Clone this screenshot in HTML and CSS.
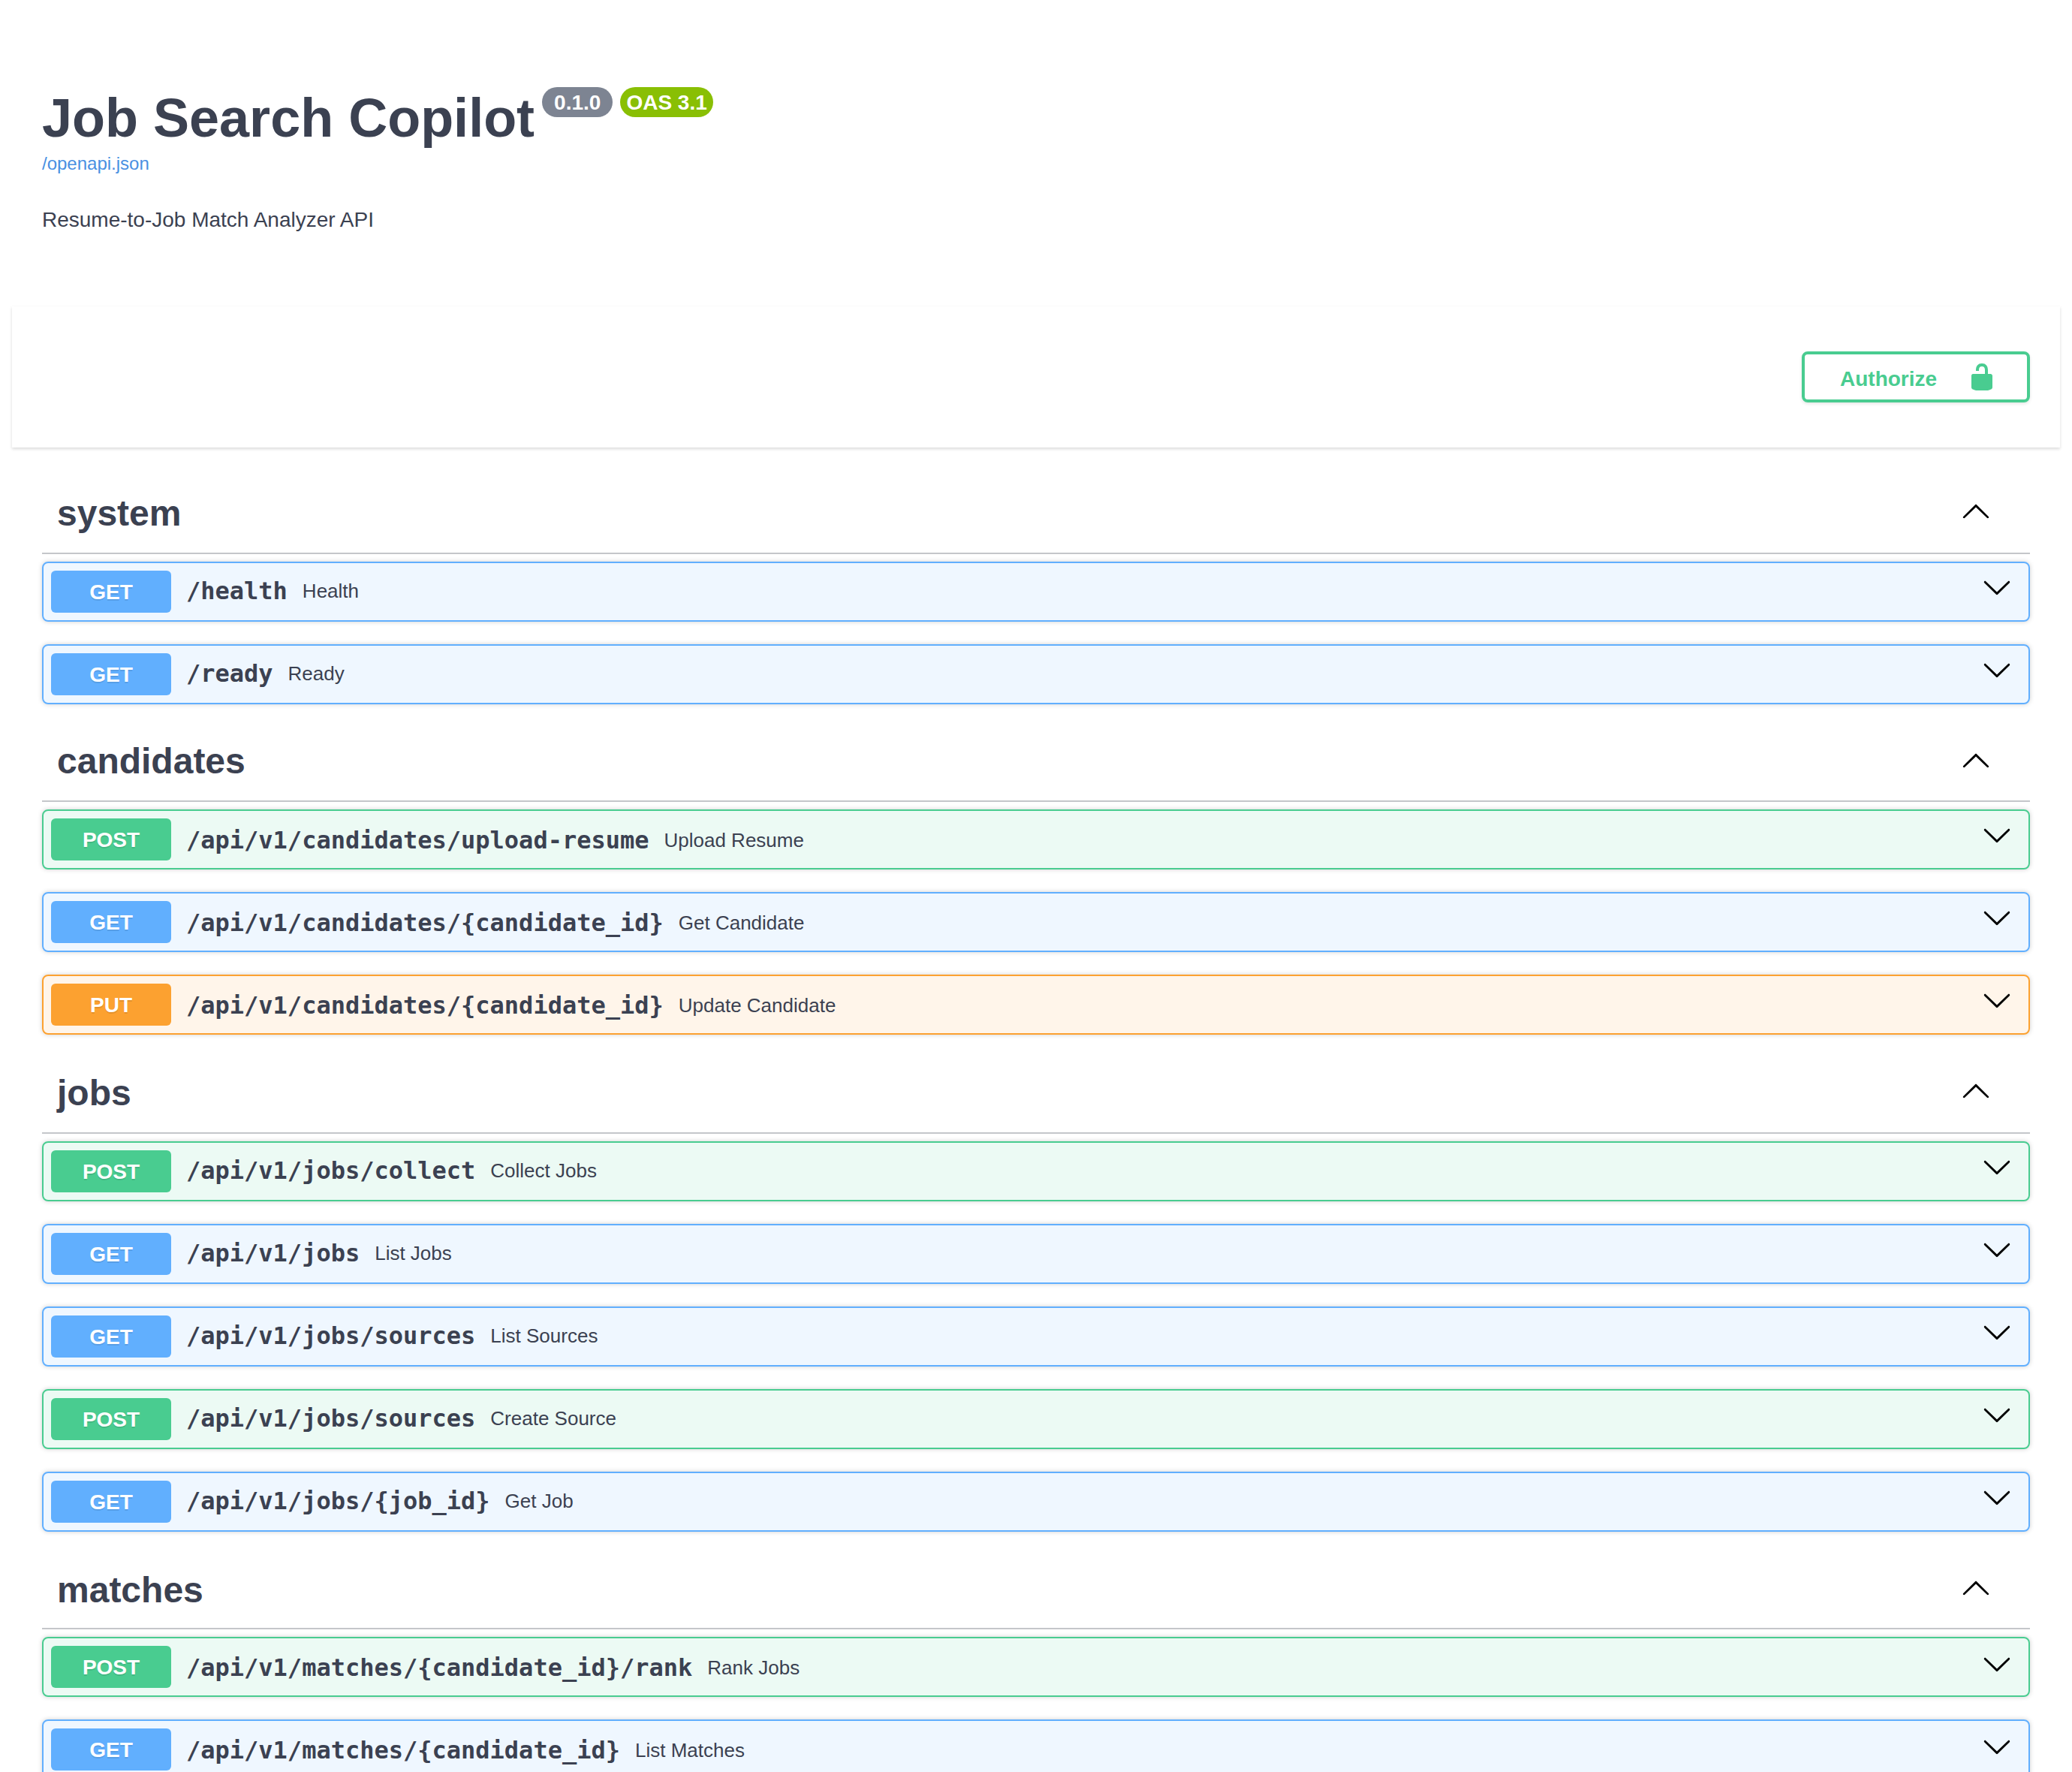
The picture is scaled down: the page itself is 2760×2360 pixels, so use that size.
FILE: index.html
```
<!DOCTYPE html>
<html lang="en">
<head>
    <meta charset="utf-8">
    <title>Job Search Copilot - Swagger UI</title>
    <link rel="stylesheet" href="styles.css">
</head>
<body>
    <!-- shared icons -->
    <svg class="sprite" width="0" height="0">
        <symbol id="unlocked" viewBox="0 0 20 20">
            <path d="M15.8 8H14V5.6C14 2.703 12.665 1 10 1 7.334 1 6 2.703 6 5.6V6h2v-.801C8 3.754 8.797 3 10 3c1.203 0 2 .754 2 2.199V8H4c-.553 0-1 .646-1 1.199V17c0 .549.428 1.139.951 1.307l1.197.387C5.672 18.861 6.55 19 7.1 19h5.8c.549 0 1.428-.139 1.951-.307l1.196-.387c.524-.167.953-.757.953-1.306V9.199C17 8.646 16.352 8 15.8 8z"/>
        </symbol>
        <symbol id="arrow-up" viewBox="0 0 20 20">
            <path d="M17.418 14.908c.272.268.709.268.979 0s.271-.701 0-.969l-7.908-7.83c-.27-.268-.707-.268-.979 0l-7.908 7.83c-.27.268-.27.701 0 .969.271.268.709.268.979 0L10 7.767l7.418 7.141z"/>
        </symbol>
        <symbol id="arrow-down" viewBox="0 0 20 20">
            <path d="M17.418 6.109c.272-.268.709-.268.979 0s.271.701 0 .969l-7.908 7.83c-.27.268-.707.268-.979 0l-7.908-7.83c-.27-.268-.27-.701 0-.969.271-.268.709-.268.979 0L10 13.25l7.418-7.141z"/>
        </symbol>
    </svg>

    <div class="swagger-ui">
        <div class="info">
            <div class="title-row">
                <h1 class="title">Job Search Copilot</h1>
                <span class="version">0.1.0</span>
                <span class="version oas">OAS 3.1</span>
            </div>
            <a class="link" href="/openapi.json">/openapi.json</a>
            <p class="description">Resume-to-Job Match Analyzer API</p>
        </div>

        <div class="scheme-container">
            <button class="authorize">
                <span>Authorize</span>
                <svg class="icon"><use href="#unlocked"/></svg>
            </button>
        </div>

        <div class="sections">
            <section class="tag-section">
                <div class="tag-header">
                    <h3>system</h3>
                    <svg class="icon"><use href="#arrow-up"/></svg>
                </div>
                <div class="opblock get">
                    <span class="method">GET</span>
                    <span class="path">/health</span>
                    <span class="summary">Health</span>
                    <svg class="icon"><use href="#arrow-down"/></svg>
                </div>
                <div class="opblock get">
                    <span class="method">GET</span>
                    <span class="path">/ready</span>
                    <span class="summary">Ready</span>
                    <svg class="icon"><use href="#arrow-down"/></svg>
                </div>
            </section>

            <section class="tag-section">
                <div class="tag-header">
                    <h3>candidates</h3>
                    <svg class="icon"><use href="#arrow-up"/></svg>
                </div>
                <div class="opblock post">
                    <span class="method">POST</span>
                    <span class="path">/api/v1/candidates/upload-resume</span>
                    <span class="summary">Upload Resume</span>
                    <svg class="icon"><use href="#arrow-down"/></svg>
                </div>
                <div class="opblock get">
                    <span class="method">GET</span>
                    <span class="path">/api/v1/candidates/{candidate_id}</span>
                    <span class="summary">Get Candidate</span>
                    <svg class="icon"><use href="#arrow-down"/></svg>
                </div>
                <div class="opblock put">
                    <span class="method">PUT</span>
                    <span class="path">/api/v1/candidates/{candidate_id}</span>
                    <span class="summary">Update Candidate</span>
                    <svg class="icon"><use href="#arrow-down"/></svg>
                </div>
            </section>

            <section class="tag-section jobs">
                <div class="tag-header">
                    <h3>jobs</h3>
                    <svg class="icon"><use href="#arrow-up"/></svg>
                </div>
                <div class="opblock post">
                    <span class="method">POST</span>
                    <span class="path">/api/v1/jobs/collect</span>
                    <span class="summary">Collect Jobs</span>
                    <svg class="icon"><use href="#arrow-down"/></svg>
                </div>
                <div class="opblock get">
                    <span class="method">GET</span>
                    <span class="path">/api/v1/jobs</span>
                    <span class="summary">List Jobs</span>
                    <svg class="icon"><use href="#arrow-down"/></svg>
                </div>
                <div class="opblock get">
                    <span class="method">GET</span>
                    <span class="path">/api/v1/jobs/sources</span>
                    <span class="summary">List Sources</span>
                    <svg class="icon"><use href="#arrow-down"/></svg>
                </div>
                <div class="opblock post">
                    <span class="method">POST</span>
                    <span class="path">/api/v1/jobs/sources</span>
                    <span class="summary">Create Source</span>
                    <svg class="icon"><use href="#arrow-down"/></svg>
                </div>
                <div class="opblock get">
                    <span class="method">GET</span>
                    <span class="path">/api/v1/jobs/{job_id}</span>
                    <span class="summary">Get Job</span>
                    <svg class="icon"><use href="#arrow-down"/></svg>
                </div>
            </section>

            <section class="tag-section matches">
                <div class="tag-header">
                    <h3>matches</h3>
                    <svg class="icon"><use href="#arrow-up"/></svg>
                </div>
                <div class="opblock post">
                    <span class="method">POST</span>
                    <span class="path">/api/v1/matches/{candidate_id}/rank</span>
                    <span class="summary">Rank Jobs</span>
                    <svg class="icon"><use href="#arrow-down"/></svg>
                </div>
                <div class="opblock get">
                    <span class="method">GET</span>
                    <span class="path">/api/v1/matches/{candidate_id}</span>
                    <span class="summary">List Matches</span>
                    <svg class="icon"><use href="#arrow-down"/></svg>
                </div>
            </section>
        </div>
    </div>
</body>
</html>
```
FILE: styles.css
```
* {
    box-sizing: border-box;
}
body {
    margin: 0;
    padding: 0 16px;
    height: 100vh;
    overflow: hidden;
    background: #fff;
    color: #3b4151;
    font-family: "Liberation Sans", Arial, sans-serif;
}
.sprite {
    display: block;
}
.icon {
    width: 40px;
    height: 40px;
    flex-shrink: 0;
}

/* info */
.info {
    height: 408px;
    padding: 116px 40px 0;
}
.title-row {
    display: flex;
    align-items: flex-start;
}
.title {
    margin: 0 10px 0 0;
    font-size: 72px;
    line-height: 83px;
}
.version {
    height: 40px;
    margin-right: 10px;
    padding: 0 16px;
    border-radius: 20px;
    background: #7d8492;
    color: #fff;
    font-size: 28px;
    font-weight: bold;
    line-height: 42px;
}
.version.oas {
    padding: 0 8px;
    background: #89bf04;
}
.link {
    display: block;
    margin-top: 5px;
    color: #4990e2;
    font-size: 24px;
    line-height: 28px;
    text-decoration: none;
}
.description {
    margin: 45px 0 0;
    font-size: 28px;
    line-height: 32px;
}

/* authorize bar */
.scheme-container {
    display: flex;
    justify-content: flex-end;
    padding: 60px 40px;
    background: #fff;
    box-shadow: 0 2px 4px rgba(0, 0, 0, .15);
}
.authorize {
    display: flex;
    justify-content: space-between;
    width: 304px;
    height: 68px;
    padding: 10px 40px 10px 47px;
    border: 4px solid #49cc90;
    border-radius: 8px;
    background: transparent;
    box-shadow: 0 2px 4px rgba(0, 0, 0, .1);
    color: #49cc90;
    font-family: inherit;
    font-size: 28px;
    font-weight: bold;
    line-height: 32px;
}
.authorize span {
    padding-top: 7px;
}
.authorize .icon {
    fill: #49cc90;
}

/* operations */
.sections {
    padding: 42px 40px 0;
}
.tag-section.jobs {
    padding-top: 2px;
}
.tag-header {
    display: flex;
    justify-content: space-between;
    height: 100px;
    margin-bottom: 10px;
    padding: 18px 52px 0 20px;
    border-bottom: 2px solid rgba(59, 65, 81, .3);
}
.tag-header h3 {
    margin: 0;
    font-size: 48px;
    line-height: 56px;
}
.matches .tag-header h3 {
    padding-top: 2px;
}
.tag-header .icon {
    margin-top: 4px;
}
.tag-section:nth-child(even) .tag-header .icon {
    margin-top: 6px;
}
.opblock {
    display: flex;
    align-items: center;
    height: 80px;
    margin-bottom: 30px;
    padding: 10px 22px 10px 10px;
    border: 2px solid;
    border-radius: 8px;
    box-shadow: 0 0 6px rgba(0, 0, 0, .19);
}
.method {
    width: 160px;
    height: 56px;
    border-radius: 6px;
    color: #fff;
    font-size: 28px;
    font-weight: bold;
    line-height: 58px;
    text-align: center;
    text-shadow: 0 2px 0 rgba(0, 0, 0, .1);
}
.path {
    margin: 0 20px;
    font-family: "DejaVu Sans Mono", monospace;
    font-size: 32px;
    font-weight: bold;
}
.summary {
    flex: 1;
    font-size: 26px;
}
.path, .summary {
    padding-bottom: 2px;
}
.tag-section:nth-child(even) .path,
.tag-section:nth-child(even) .summary {
    padding: 2px 0 0;
}
.opblock .icon {
    margin-bottom: 12px;
}
.matches .opblock .icon {
    margin-bottom: 8px;
}
.get {
    border-color: #61affe;
    background: rgba(97, 175, 254, .1);
}
.get .method {
    background: #61affe;
}
.post {
    border-color: #49cc90;
    background: rgba(73, 204, 144, .1);
}
.post .method {
    background: #49cc90;
}
.put {
    border-color: #fca130;
    background: rgba(252, 161, 48, .1);
}
.put .method {
    background: #fca130;
}
```
